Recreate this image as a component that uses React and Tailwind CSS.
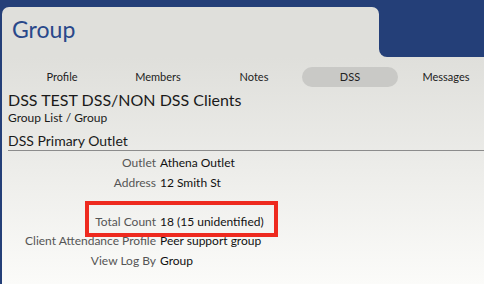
const tabs = ['Profile', 'Members', 'Notes', 'DSS', 'Messages']

const rows = [
  { label: 'Outlet', value: 'Athena Outlet' },
  { label: 'Address', value: '12 Smith St' },
  { label: '', value: '' },
  { label: 'Total Count', value: '18 (15 unidentified)' },
  { label: 'Client Attendance Profile', value: 'Peer support group' },
  { label: 'View Log By', value: 'Group' },
]

export default function App() {
  return (
    <div
      className="w-[484px] h-[284px] overflow-hidden bg-[#243f78] pt-[7px] pl-[2px]"
      style={{ fontFamily: 'Lato, "Open Sans", sans-serif' }}
    >
      {/* Header tab */}
      <div className="flex h-[50px]">
        <div className="w-[377px] shrink-0 bg-[#dfdfdb] rounded-t-[7px] pl-[10px] pt-[8px]">
          <h1 className="text-[23px] leading-[28px] text-[#29488a]">Group</h1>
        </div>
        <div className="flex-1 bg-[#dfdfdb] -mt-[7px]">
          <div className="h-full bg-[#243f78] rounded-bl-[8px]" />
        </div>
      </div>

      {/* Body */}
      <div className="h-[227px] bg-gradient-to-b from-[#dfdfdb] to-[#fbfbf9] pt-[10px]">
        <div className="flex pl-[12px] w-[600px]">
          {tabs.map((t) => (
            <div
              key={t}
              className={`w-[96px] h-[20px] shrink-0 flex items-center justify-center rounded-full text-[11px] text-[#222] ${
                t === 'DSS' ? 'bg-[#c9c9c6]' : ''
              }`}
            >
              {t}
            </div>
          ))}
        </div>

        <div className="pl-[6px] pt-[3px]">
          <h2 className="text-[16px] leading-[20px] text-[#1a1a1a]">DSS TEST DSS/NON DSS Clients</h2>
          <p className="text-[12px] leading-[16px] text-[#1a1a1a]">Group List / Group</p>
          <div className="mt-[6px] border-b border-[#8c8c8c] text-[14px] leading-[18px] text-[#1a1a1a]">
            DSS Primary Outlet
          </div>
        </div>

        <div className="relative pt-[2px]">
          {rows.map((r, i) => (
            <div key={i} className="grid grid-cols-[154px_1fr] gap-[4px] h-[19.5px] text-[12px] leading-[19.5px]">
              <span className="text-right text-[#555]">{r.label}</span>
              <span className="text-[#111]">{r.value}</span>
            </div>
          ))}
          {/* highlight box */}
          <div className="absolute left-[83px] top-[50px] w-[193px] h-[36px] border-[4px] border-[#ee2a1f]" />
        </div>
      </div>
    </div>
  )
}
